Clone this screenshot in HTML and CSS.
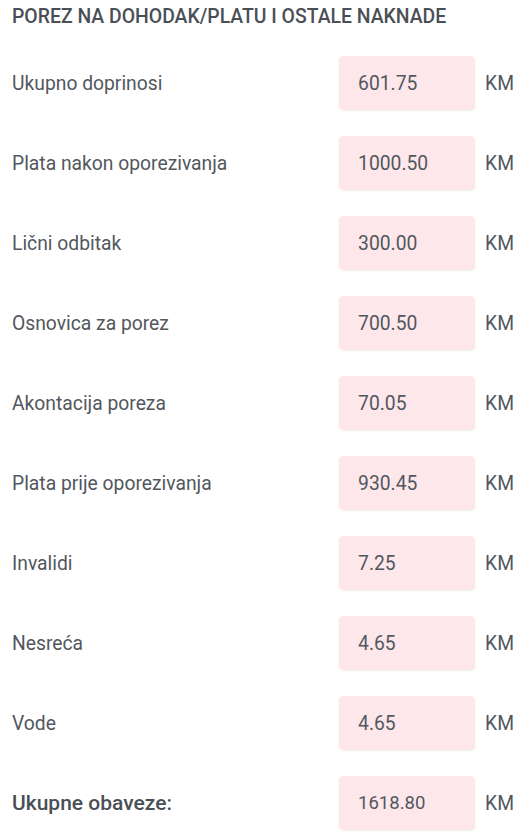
FILE: index.html
```html
<!DOCTYPE html>
<html lang="bs">
<head>
  <meta charset="UTF-8">
  <title>Porez na dohodak</title>
  <link rel="stylesheet" href="styles.css">
</head>
<body>

  <div class="wrapper">
    <h3 class="title">POREZ NA DOHODAK/PLATU I OSTALE NAKNADE</h3>

    <div class="row">
      <label>Ukupno doprinosi</label>
      <input type="text" value="601.75" readonly>
      <span class="unit">KM</span>
    </div>
    <div class="row">
      <label>Plata nakon oporezivanja</label>
      <input type="text" value="1000.50" readonly>
      <span class="unit">KM</span>
    </div>
    <div class="row">
      <label>Lični odbitak</label>
      <input type="text" value="300.00" readonly>
      <span class="unit">KM</span>
    </div>
    <div class="row">
      <label>Osnovica za porez</label>
      <input type="text" value="700.50" readonly>
      <span class="unit">KM</span>
    </div>
    <div class="row">
      <label>Akontacija poreza</label>
      <input type="text" value="70.05" readonly>
      <span class="unit">KM</span>
    </div>
    <div class="row">
      <label>Plata prije oporezivanja</label>
      <input type="text" value="930.45" readonly>
      <span class="unit">KM</span>
    </div>
    <div class="row">
      <label>Invalidi</label>
      <input type="text" value="7.25" readonly>
      <span class="unit">KM</span>
    </div>
    <div class="row">
      <label>Nesreća</label>
      <input type="text" value="4.65" readonly>
      <span class="unit">KM</span>
    </div>
    <div class="row">
      <label>Vode</label>
      <input type="text" value="4.65" readonly>
      <span class="unit">KM</span>
    </div>

    <div class="row total">
      <label>Ukupne obaveze:</label>
      <input type="text" value="1618.80" readonly>
      <span class="unit">KM</span>
    </div>
  </div>

</body>
</html>
```

FILE: styles.css
```css
body {
  font-family: Roboto, 'Noto Sans', sans-serif;
  margin: 0;
  padding: 0;
  background: #fff;
  color: #52575e;
}

.wrapper {
  padding: 0 15px 0 12px;
}

.title {
  margin: 0;
  padding-top: 6px;
  height: 50px;
  font-size: 19.4px;
  font-weight: 500;
  line-height: 22px;
  color: #4a4f56;
}

.row {
  display: flex;
  align-items: center;
  height: 54px;
  margin-bottom: 26px;
}

.row label {
  flex: 1;
  font-size: 19.3px;
}

.row input {
  width: 136px;
  height: 54px;
  box-sizing: border-box;
  padding: 0 0 0 19px;
  border: none;
  border-radius: 5px;
  background: #fde7eb;
  box-shadow: 0 1px 2px rgba(0,0,0,0.08);
  font-family: inherit;
  font-size: 19.3px;
  color: #52575e;
  outline: none;
}

.unit {
  margin-left: 10px;
  font-size: 19.3px;
}

.total {
  margin-top: 4px;
}

.total label {
  font-size: 21px;
  font-weight: 500;
  color: #4a4f56;
}

.total input {
  font-size: 18.5px;
}
```
